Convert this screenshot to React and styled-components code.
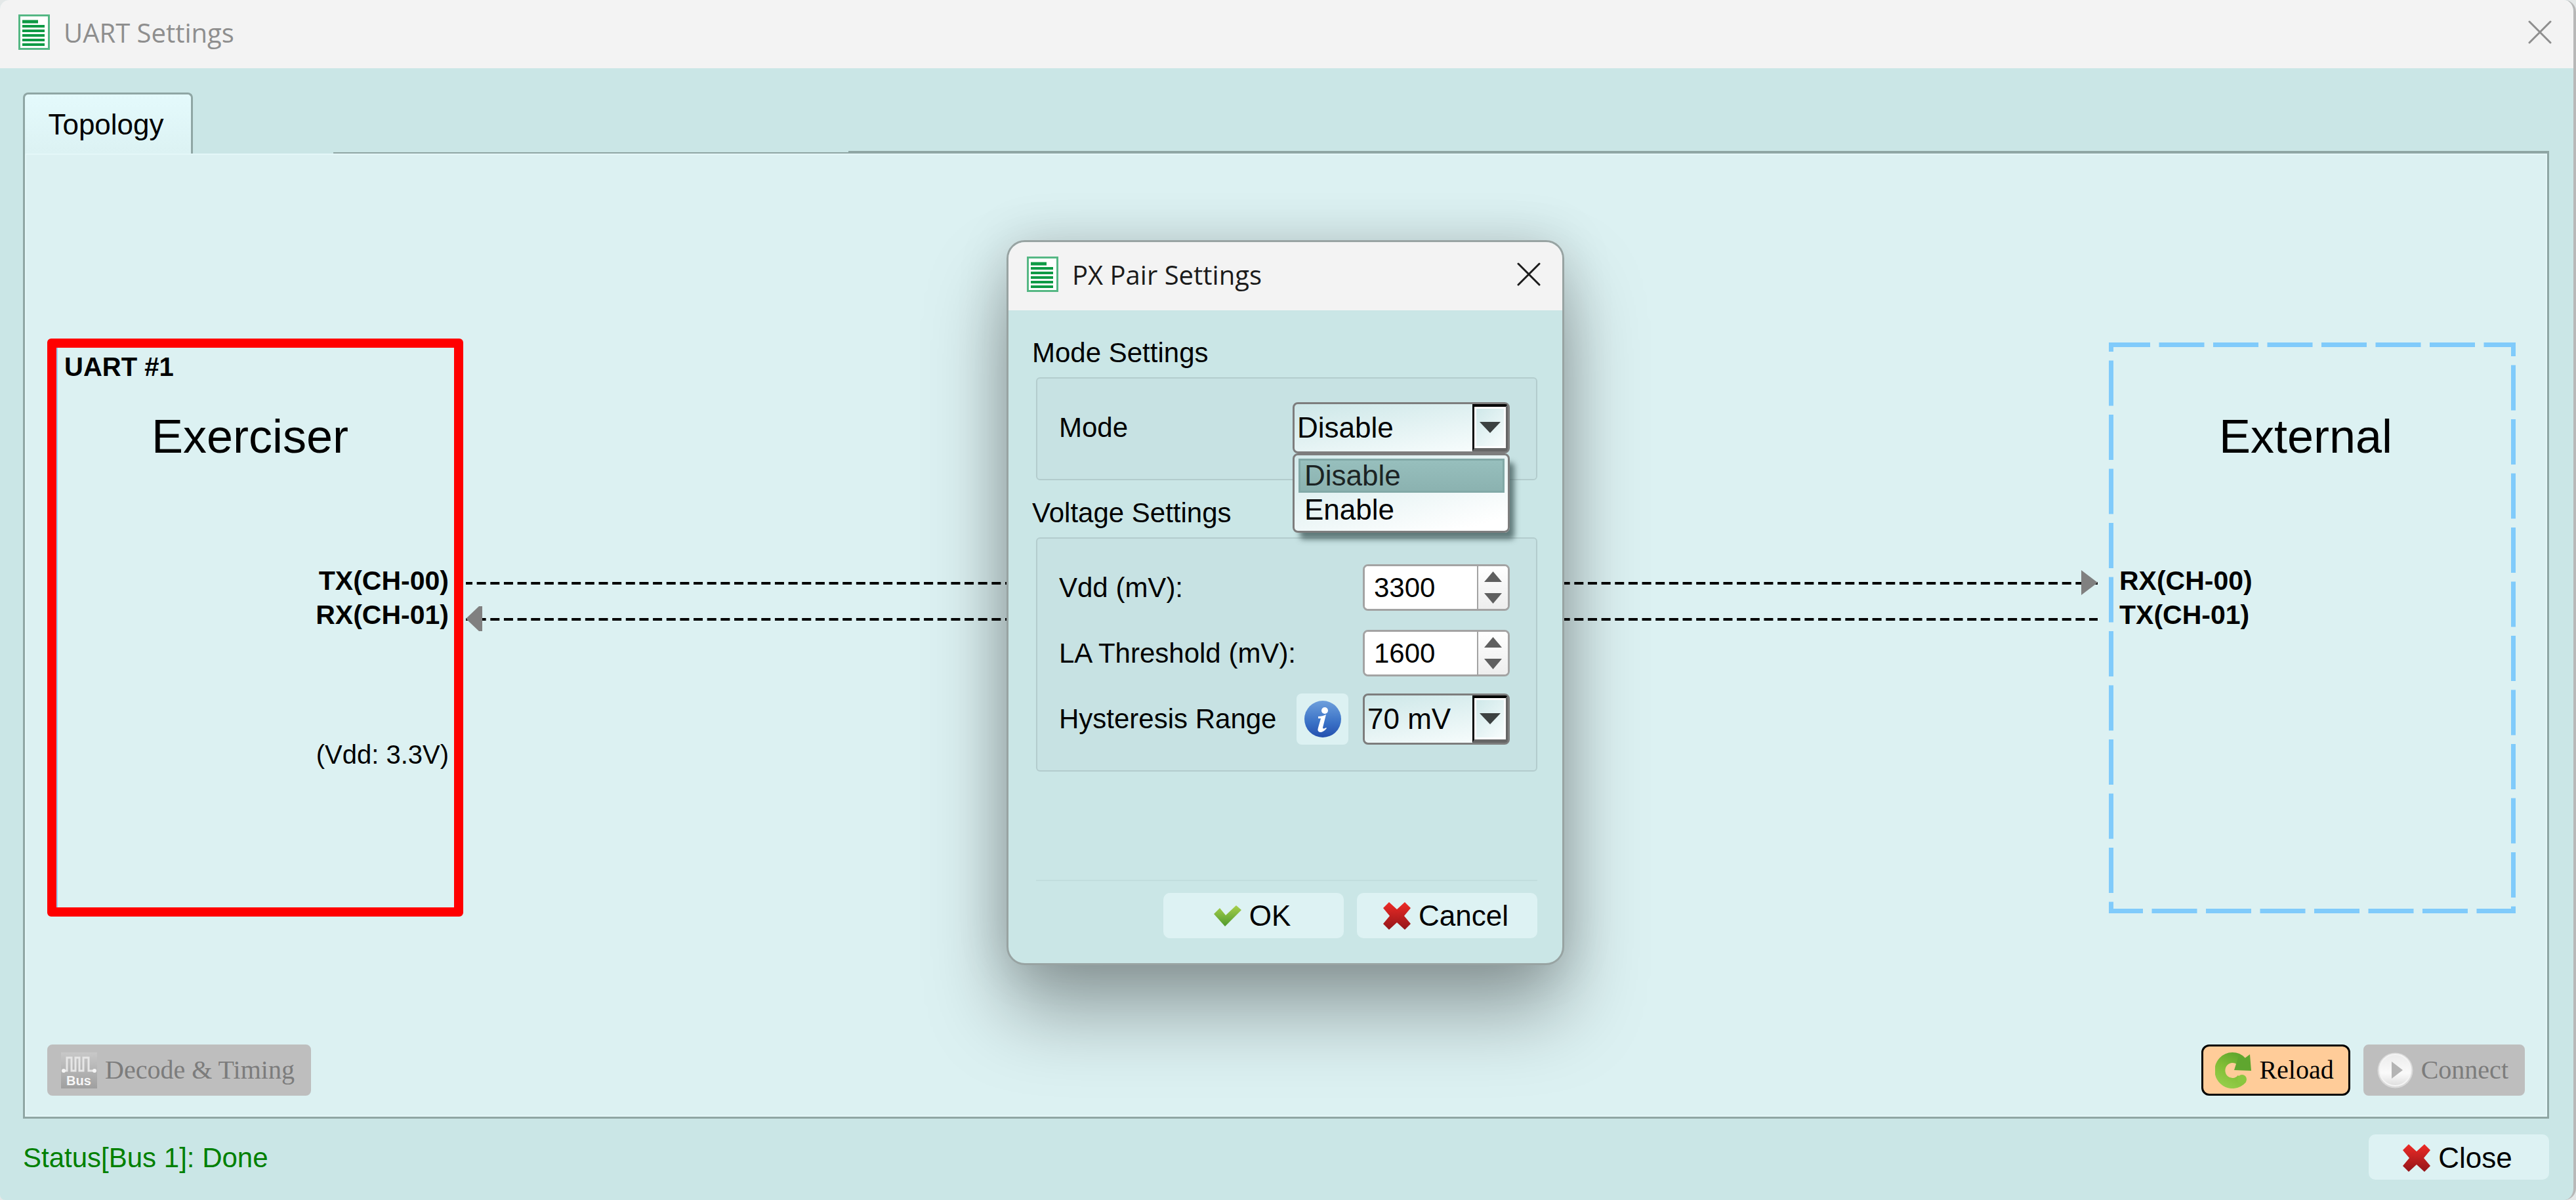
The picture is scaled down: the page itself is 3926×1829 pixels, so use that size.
import React, { useState } from 'react';
import styled, { createGlobalStyle, css } from 'styled-components';

const SANS = "'Liberation Sans', Arial, sans-serif";
const SERIF = "'Liberation Serif', 'Times New Roman', serif";
const CAPTION = "'Open Sans', 'Noto Sans', sans-serif";

const GlobalStyle = createGlobalStyle`
  *, *::before, *::after {
    box-sizing: border-box;
  }
  body {
    background: #e4e8e8;
    margin: 0;
  }
  button, input, select {
    color: inherit;
    font: inherit;
    margin: 0;
  }
`;

const Window = styled.div`
  background: #cae6e6;
  border-radius: 14px 18px 18px 8px;
  border-right: 4px solid #b8b8b8;
  color: #000;
  display: flex;
  flex-direction: column;
  font-family: ${SANS};
  font-size: 42px;
  line-height: 50px;
  min-height: 100vh;
  overflow: hidden;
  position: relative;
`;

const StyledTitleBar = styled.header`
  align-items: center;
  background: #f3f3f3;
  color: ${({ active }) => (active ? '#1b1b1b' : '#8e8e8e')};
  display: flex;
  flex: none;
  font-family: ${CAPTION};
  font-size: 40px;
  gap: 21px;
  height: 104px;
  padding: 0 33px 6px 28px;
`;

const Caption = styled.h1`
  flex: 1;
  font-size: inherit;
  font-weight: 400;
  margin: 0;
  padding-top: 2px;
`;

const IconButton = styled.button`
  appearance: none;
  background: none;
  border: 0;
  display: flex;
  padding: 0;
`;

const Body = styled.main`
  display: flex;
  flex: 1;
  flex-direction: column;
  padding: 37px 37px 0 35px;
`;

const TabRow = styled.div`
  align-items: flex-end;
  display: flex;
`;

const Tab = styled.button`
  appearance: none;
  background: linear-gradient(#e4fafc, #dcf2f3);
  border: 3px solid #8fa6a4;
  border-bottom: 0;
  border-radius: 8px 8px 0 0;
  font-size: 44px;
  height: 93px;
  padding: 2px 6px 0 0;
  width: 259px;
`;

const Edge = styled.span`
  background: ${({ thickness }) => (thickness ? '#8fa6a4' : 'none')};
  flex: ${({ length }) => (length ? `0 1 ${length}px` : '1')};
  height: ${({ thickness }) => thickness || 0}px;
`;

const Panel = styled.section`
  background: #dcf1f2;
  border: 3px solid #8fa6a4;
  border-top: 0;
  box-shadow: inset 0 0 0 2px #e4f7f8;
  display: flex;
  flex: 1;
  flex-direction: column;
  padding: 282px 34px 32px;
`;

const Diagram = styled.div`
  align-items: center;
  display: flex;
  font-size: 40px;
  padding-right: 14px;
`;

const Node = styled.article`
  flex: none;
  ${({ selected }) =>
    selected
      ? css`
          border: 14px solid #f00;
          border-radius: 6px;
          box-shadow: inset 2px 0 #8fcfff;
          height: 881px;
          padding: 4px 8px 0 12px;
          text-align: right;
          width: 634px;
        `
      : css`
          height: 870px;
          padding: 101px 16px 0;
          position: relative;
          width: 620px;
        `}
`;

const NodeTag = styled.div`
  font-weight: 700;
  margin-bottom: 39px;
  text-align: left;
`;

const NodeName = styled.h2`
  font-size: 72px;
  font-weight: 400;
  line-height: 84px;
  margin: 0 0 152px;
  padding-right: 20px;
  text-align: center;
`;

const Pins = styled.ul`
  font-size: 41px;
  font-weight: 700;
  line-height: 52px;
  list-style: none;
  margin: 0;
  padding: 0;
`;

const Supply = styled.p`
  line-height: 52px;
  margin: 161px 0 0;
`;

const NodeOutline = styled.svg`
  height: 100%;
  left: 0;
  position: absolute;
  top: 0;
  width: 100%;
`;

const Links = styled.div`
  align-self: stretch;
  display: flex;
  flex: 1;
  flex-direction: column;
  padding: 345px 17px 0 4px;
`;

const LinkDrawing = styled.svg`
  display: block;
  height: 55px;
  width: 100%;
`;

const ToolRow = styled.div`
  display: flex;
  gap: 20px;
  margin-top: auto;
  padding-top: 32px;
`;

const Spacer = styled.span`
  flex: 1;
`;

const ToolButton = styled.button`
  align-items: center;
  appearance: none;
  background: #ffcc99;
  border: 3px solid #000;
  border-radius: 12px;
  display: flex;
  font-family: ${SERIF};
  font-size: 40px;
  gap: 12px;
  height: 78px;
  padding: 0 22px 0 18px;

  &:disabled {
    background: #bebebe;
    border-color: #bebebe;
    border-radius: 8px;
    color: #7c7c7c;
  }
`;

const Footer = styled.footer`
  align-items: center;
  display: flex;
  justify-content: space-between;
  padding: 24px 0 31px;
`;

const Status = styled.output`
  color: #008000;
  padding-top: 3px;
`;

const PushButton = styled.button`
  align-items: center;
  appearance: none;
  background: #ddf2f3;
  border: 0;
  border-radius: 10px;
  display: flex;
  font-size: 44px;
  gap: 12px;
  height: 69px;
  justify-content: center;
  padding: 2px 4px 0 0;
  width: 275px;
`;

const Overlay = styled.div`
  align-items: center;
  display: flex;
  inset: 0;
  justify-content: center;
  padding: 7px 4px 0 0;
  position: absolute;
`;

const StyledDialog = styled.div`
  background: #cae6e6;
  border: 3px solid #98a3a2;
  border-radius: 28px;
  box-shadow: 0 70px 120px rgba(0, 0, 0, 0.34), 0 0 80px rgba(0, 0, 0, 0.14);
  width: 850px;

  > header {
    border-radius: 25px 25px 0 0;
  }
`;

const DialogBody = styled.form`
  padding: 40px 38px 38px 36px;
`;

const GroupTitle = styled.h2`
  font-size: inherit;
  font-weight: 400;
  margin: 0 0 12px;
`;

const Group = styled.div`
  background: #c7e2e3;
  border: 2px solid #b3cccd;
  border-radius: 6px;
  display: flex;
  flex-direction: column;
  gap: 22px;
  margin: 0 0 25px 6px;
  padding: 36px 40px 39px 33px;
`;

const Row = styled.div`
  align-items: center;
  display: flex;
  gap: 22px;
  height: 78px;

  label {
    flex: 1;
    white-space: nowrap;
  }
`;

const ComboShell = styled.div`
  position: relative;
  width: ${({ wide }) => (wide ? 331 : 224)}px;
`;

const ComboFrame = styled.div`
  background: linear-gradient(170deg, #cde7e8, #fafefe);
  border: 3px solid #7d7d7d;
  border-radius: 8px;
  display: flex;
  font-size: 44px;
  height: 78px;
`;

const ComboSelect = styled.select`
  appearance: none;
  background: none;
  border: 0;
  flex: 1;
  min-width: 0;
  outline: 0;
  padding: 0 0 0 4px;
`;

const ComboArrow = styled.span`
  align-items: center;
  background: linear-gradient(135deg, #cde7e8, #fafefe);
  border: solid;
  border-color: #000 #666 #666 #000;
  border-radius: 0 4px 4px 0;
  border-width: 4px 3px 5px 3px;
  box-shadow: inset 0 0 0 3px #fff;
  display: flex;
  justify-content: center;
  pointer-events: none;
  width: 54px;
`;

const Popup = styled.ul`
  background: linear-gradient(165deg, #d3eaeb, #fff 90%);
  border: 3px solid #7d7d7d;
  border-radius: 8px;
  box-shadow: 9px 12px 8px -2px rgba(60, 85, 85, 0.75);
  font-size: 44px;
  left: 0;
  list-style: none;
  margin: 0;
  padding: 5px 5px 6px 6px;
  position: absolute;
  right: 0;
  top: 100%;
  z-index: 1;
`;

const PopupItem = styled.li`
  border: 3px solid transparent;
  height: 52px;
  line-height: 46px;
  padding-left: 6px;
  ${({ current }) =>
    current &&
    css`
      background: linear-gradient(#97bfbd, #8bb2b0);
      border-color: #82a9a7;
      color: #1c2424;
    `}
`;

const SpinFrame = styled.div`
  background: #fff;
  border: 3px solid #a3a3a3;
  border-radius: 8px;
  display: flex;
  height: 71px;
  overflow: hidden;
  width: 224px;
`;

const SpinInput = styled.input`
  border: 0;
  flex: 1;
  min-width: 0;
  outline: 0;
  padding: 0 0 0 14px;
`;

const SpinButtons = styled.div`
  background: linear-gradient(#fff, #ededed);
  border-left: 2px solid #a3a3a3;
  display: flex;
  flex-direction: column;
  width: 47px;

  button {
    align-items: center;
    flex: 1;
    justify-content: center;
  }
`;

const InfoButton = styled(IconButton)`
  align-items: center;
  background: #dcf1f2;
  border-radius: 8px;
  height: 78px;
  justify-content: center;
  width: 79px;
`;

const Actions = styled.div`
  border-top: 2px solid #c1dddd;
  display: flex;
  gap: 20px;
  justify-content: flex-end;
  margin: 165px 0 0 6px;
  padding-top: 18px;
`;

const DocIcon = () => (
  <svg width="48" height="54" viewBox="0 0 48 54" aria-hidden="true">
    <rect x="1.5" y="1.5" width="45" height="51" fill="#fff" stroke="#55b784" strokeWidth="3" />
    <path d="M6 11h24" stroke="#0e9a45" strokeWidth="5" />
    <path
      d="M6 18h34M6 25h34M6 32h34M6 39h34M6 46h34"
      stroke="#0e9a45"
      strokeWidth="4"
    />
  </svg>
);

const CloseGlyph = () => (
  <svg width="36" height="36" viewBox="0 0 36 36" aria-hidden="true">
    <path
      d="M2 2L34 34M34 2L2 34"
      stroke="currentColor"
      strokeLinecap="round"
      strokeWidth="3"
    />
  </svg>
);

const CrossIcon = () => (
  <svg width="42" height="42" viewBox="0 0 42 42" aria-hidden="true">
    <defs>
      <linearGradient id="cross" x1="0" y1="0" x2="0" y2="1">
        <stop offset="0" stopColor="#ee2b26" />
        <stop offset="1" stopColor="#931519" />
      </linearGradient>
    </defs>
    <path
      d="M9 0L21 11L33 0L42 9L32 21L42 33L33 42L21 31L9 42L0 33L10 21L0 9Z"
      fill="url(#cross)"
    />
  </svg>
);

const CheckIcon = () => (
  <svg width="42" height="32" viewBox="0 0 42 32" aria-hidden="true">
    <defs>
      <linearGradient id="check" x1="0" y1="0" x2="0" y2="1">
        <stop offset="0" stopColor="#a8d04c" />
        <stop offset="1" stopColor="#4f9a2c" />
      </linearGradient>
    </defs>
    <path d="M0 13L9 4L18 15L34 0L42 7L17 32Z" fill="url(#check)" />
  </svg>
);

const BusIcon = () => (
  <svg width="55" height="55" viewBox="0 0 55 55" aria-hidden="true">
    <defs>
      <linearGradient id="bus" x1="0" y1="0" x2="0" y2="1">
        <stop offset="0" stopColor="#c8c8c8" />
        <stop offset="1" stopColor="#9f9f9f" />
      </linearGradient>
    </defs>
    <rect width="55" height="55" fill="url(#bus)" />
    <path
      d="M3 28H9V8H16V28H22V8H28V28H34V8H42V28H52"
      fill="none"
      stroke="#e6e6e6"
      strokeWidth="3"
    />
    <circle cx="4" cy="28" r="3" fill="#f4f4f4" />
    <circle cx="51" cy="28" r="3" fill="#f4f4f4" />
    <text
      x="27"
      y="50"
      fill="#f6f6f6"
      fontFamily="Liberation Sans, sans-serif"
      fontSize="20"
      fontWeight="700"
      textAnchor="middle"
    >
      Bus
    </text>
  </svg>
);

const ReloadIcon = () => (
  <svg width="55" height="55" viewBox="0 0 55 55" aria-hidden="true">
    <defs>
      <linearGradient id="reload" gradientUnits="userSpaceOnUse" x1="42" y1="0" x2="14" y2="55">
        <stop offset="0" stopColor="#57a22d" />
        <stop offset="0.5" stopColor="#80bd35" />
        <stop offset="1" stopColor="#97cf4c" />
      </linearGradient>
    </defs>
    <path
      d="M41 40A19 19.5 0 1 1 40 14"
      fill="none"
      stroke="url(#reload)"
      strokeWidth="16"
    />
    <circle cx="41" cy="41" r="7" fill="#8ac73f" />
    <path d="M29 27L55 28L53 3L45 9L36 5Z" fill="#5fa62f" />
  </svg>
);

const PlayIcon = () => (
  <svg width="55" height="55" viewBox="0 0 55 55" aria-hidden="true">
    <defs>
      <linearGradient id="play" x1="0" y1="0" x2="0" y2="1">
        <stop offset="0" stopColor="#ececec" />
        <stop offset="0.6" stopColor="#fafafa" />
        <stop offset="1" stopColor="#dedede" />
      </linearGradient>
    </defs>
    <circle cx="27.5" cy="27.5" r="27" fill="#d9d9d9" />
    <circle cx="27.5" cy="27" r="24" fill="url(#play)" stroke="#f4f4f4" strokeWidth="2" />
    <path d="M22 14L39 27L22 40Z" fill="#b4b4b4" />
  </svg>
);

const InfoIcon = () => (
  <svg width="56" height="56" viewBox="0 0 56 56" aria-hidden="true">
    <defs>
      <linearGradient id="info" x1="0" y1="0" x2="0" y2="1">
        <stop offset="0" stopColor="#6d9fdc" />
        <stop offset="0.6" stopColor="#3a71c6" />
        <stop offset="1" stopColor="#234fae" />
      </linearGradient>
    </defs>
    <circle cx="28" cy="28" r="28" fill="url(#info)" />
    <circle cx="31" cy="15" r="5" fill="#fff" />
    <path
      d="M21 24Q28 24 33 21L28 41Q28 44 33 41L34 42Q29 48 24 48Q19 47 21 41L25 27H21Z"
      fill="#fff"
    />
  </svg>
);

const Triangle = ({ up, width = 27, height = 16, color = '#5f5f5f' }) => (
  <svg width={width} height={height} viewBox="0 0 10 10" preserveAspectRatio="none" aria-hidden="true">
    <path d={up ? 'M0 10L5 0L10 10Z' : 'M0 0H10L5 10Z'} fill={color} />
  </svg>
);

// One wire between the two nodes; the arrow sits on the receiving end.
const Link = ({ toRight }) => (
  <LinkDrawing role="img" aria-label={toRight ? 'to external' : 'from external'}>
    <line
      x1="0"
      x2="100%"
      y1="28"
      y2="28"
      stroke="#000"
      strokeDasharray="14 6.65"
      strokeDashoffset="4"
      strokeWidth="4"
    />
    {toRight ? (
      <svg x="100%" overflow="visible">
        <path d="M0 27L-25 8V46Z" fill="#808080" />
      </svg>
    ) : (
      <path d="M0 27L20 8H25V46H20Z" fill="#808080" />
    )}
  </LinkDrawing>
);

const DashedOutline = () => (
  <NodeOutline aria-hidden="true" stroke="#80cbfb" strokeDasharray="69 13.5" strokeWidth="7" overflow="visible">
    <line x1="0" x2="100%" y1="3.5" y2="3.5" strokeDashoffset="6" />
    <line x1="3.5" x2="3.5" y1="0" y2="100%" strokeDashoffset="55" />
    <svg x="100%" overflow="visible" height="100%">
      <line x1="-3.5" x2="-3.5" y1="0" y2="100%" strokeDashoffset="48" />
    </svg>
    <svg y="100%" overflow="visible" width="100%">
      <line x1="0" x2="100%" y1="-3.5" y2="-3.5" strokeDashoffset="17" />
    </svg>
  </NodeOutline>
);

const TitleBar = ({ active, title, onClose }) => (
  <StyledTitleBar active={active ? 1 : 0}>
    <DocIcon />
    <Caption>{title}</Caption>
    <IconButton type="button" aria-label={`Close ${title}`} onClick={onClose}>
      <CloseGlyph />
    </IconButton>
  </StyledTitleBar>
);

const Combo = ({ id, options, value, onChange, open, wide }) => (
  <ComboShell wide={wide ? 1 : 0}>
    <ComboFrame>
      <ComboSelect id={id} value={value} onChange={e => onChange(e.target.value)}>
        {options.map(option => (
          <option key={option}>{option}</option>
        ))}
      </ComboSelect>
      <ComboArrow>
        <Triangle width={32} height={17} color="#3c4141" />
      </ComboArrow>
    </ComboFrame>
    {open && (
      <Popup role="listbox" aria-label={id}>
        {options.map(option => (
          <PopupItem
            key={option}
            role="option"
            aria-selected={option === value}
            current={option === value ? 1 : 0}
            onClick={() => onChange(option)}
          >
            {option}
          </PopupItem>
        ))}
      </Popup>
    )}
  </ComboShell>
);

const SpinBox = ({ id, value, onChange, step = 100 }) => (
  <SpinFrame>
    <SpinInput
      id={id}
      inputMode="numeric"
      value={value}
      onChange={e => onChange(Number(e.target.value) || 0)}
    />
    <SpinButtons>
      <IconButton type="button" aria-label="Increase" onClick={() => onChange(value + step)}>
        <Triangle up />
      </IconButton>
      <IconButton type="button" aria-label="Decrease" onClick={() => onChange(value - step)}>
        <Triangle />
      </IconButton>
    </SpinButtons>
  </SpinFrame>
);

const PairSettings = ({ onClose }) => {
  const [mode, setMode] = useState('Disable');
  const [listOpen, setListOpen] = useState(true);
  const [vdd, setVdd] = useState(3300);
  const [threshold, setThreshold] = useState(1600);
  const [range, setRange] = useState('70 mV');

  return (
    <Overlay>
      <StyledDialog role="dialog" aria-label="PX Pair Settings">
        <TitleBar active title="PX Pair Settings" onClose={onClose} />
        <DialogBody onSubmit={e => e.preventDefault()}>
          <GroupTitle id="mode-title">Mode Settings</GroupTitle>
          <Group role="group" aria-labelledby="mode-title">
            <Row>
              <label htmlFor="mode">Mode</label>
              <Combo
                id="mode"
                wide
                open={listOpen}
                options={['Disable', 'Enable']}
                value={mode}
                onChange={next => {
                  setMode(next);
                  setListOpen(false);
                }}
              />
            </Row>
          </Group>
          <GroupTitle id="voltage-title">Voltage Settings</GroupTitle>
          <Group role="group" aria-labelledby="voltage-title">
            <Row>
              <label htmlFor="vdd">Vdd (mV):</label>
              <SpinBox id="vdd" value={vdd} onChange={setVdd} />
            </Row>
            <Row>
              <label htmlFor="threshold">LA Threshold (mV):</label>
              <SpinBox id="threshold" value={threshold} onChange={setThreshold} />
            </Row>
            <Row>
              <label htmlFor="range">Hysteresis Range</label>
              <InfoButton type="button" aria-label="About hysteresis range">
                <InfoIcon />
              </InfoButton>
              <Combo
                id="range"
                options={['70 mV', '140 mV']}
                value={range}
                onChange={setRange}
              />
            </Row>
          </Group>
          <Actions>
            <PushButton type="submit" onClick={onClose}>
              <CheckIcon />
              OK
            </PushButton>
            <PushButton type="button" onClick={onClose}>
              <CrossIcon />
              Cancel
            </PushButton>
          </Actions>
        </DialogBody>
      </StyledDialog>
    </Overlay>
  );
};

const App = () => {
  const [dialogOpen, setDialogOpen] = useState(true);

  return (
    <>
      <GlobalStyle />
      <Window>
        <TitleBar title="UART Settings" />
        <Body>
          <TabRow role="tablist">
            <Tab type="button" role="tab" aria-selected="true">
              Topology
            </Tab>
            <Edge length={214} />
            <Edge length={785} thickness={2} />
            <Edge thickness={4} />
          </TabRow>
          <Panel role="tabpanel">
            <Diagram>
              <Node selected>
                <NodeTag>UART #1</NodeTag>
                <NodeName>Exerciser</NodeName>
                <Pins>
                  <li>TX(CH-00)</li>
                  <li>RX(CH-01)</li>
                </Pins>
                <Supply>(Vdd: 3.3V)</Supply>
              </Node>
              <Links>
                <Link toRight />
                <Link />
              </Links>
              <Node>
                <DashedOutline />
                <NodeName>External</NodeName>
                <Pins>
                  <li>RX(CH-00)</li>
                  <li>TX(CH-01)</li>
                </Pins>
              </Node>
            </Diagram>
            <ToolRow>
              <ToolButton type="button" disabled>
                <BusIcon />
                Decode &amp; Timing
              </ToolButton>
              <Spacer />
              <ToolButton type="button">
                <ReloadIcon />
                Reload
              </ToolButton>
              <ToolButton type="button" disabled>
                <PlayIcon />
                Connect
              </ToolButton>
            </ToolRow>
          </Panel>
          <Footer>
            <Status>Status[Bus 1]: Done</Status>
            <PushButton type="button">
              <CrossIcon />
              Close
            </PushButton>
          </Footer>
        </Body>
        {dialogOpen && <PairSettings onClose={() => setDialogOpen(false)} />}
      </Window>
    </>
  );
};

export default App;
